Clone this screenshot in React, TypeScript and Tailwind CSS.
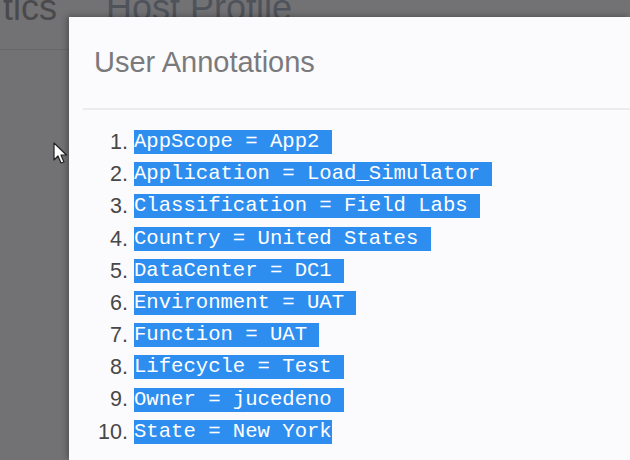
import React from "react";

const annotations = [
  "AppScope = App2 ",
  "Application = Load_Simulator ",
  "Classification = Field Labs ",
  "Country = United States ",
  "DataCenter = DC1 ",
  "Environment = UAT ",
  "Function = UAT ",
  "Lifecycle = Test ",
  "Owner = jucedeno ",
  "State = New York",
];

const Cursor = () => (
  <svg width="16" height="24" viewBox="0 0 16 24" className="absolute left-[53px] top-[142px]">
    <path d="M1 1 L1 18 L5 14 L8 21 L11 20 L8 13 L13.5 13 Z" fill="#ffffff" stroke="#222" strokeWidth="1.2" strokeLinejoin="round" />
  </svg>
);

const App = () => {
  return (
    <div className="relative w-[630px] h-[460px] overflow-hidden bg-[#727174] font-['Liberation_Sans',sans-serif]">
      {/* page behind the dimmed overlay */}
      <div className="h-[50px] border-b border-[#676668] flex items-start overflow-hidden">
        <span className="text-[36px] leading-[30px] text-[#4a494b] ml-[3px] mt-[-7px]">tics</span>
        <span className="text-[36px] leading-[30px] text-[#4e535b] ml-[49px] mt-[-7px]">Host Profile</span>
      </div>

      <Cursor />

      {/* modal */}
      <div className="absolute left-[69px] top-[17px] right-0 bottom-0 bg-[#fbfafc] shadow-[-2px_-1px_6px_rgba(0,0,0,0.3)]">
        <h2 className="pt-[28px] pl-[25px] text-[29px] leading-[34px] text-[#7a7a7c]">User Annotations</h2>
        <div className="mt-[29px] ml-[14px] h-[2px] bg-[#ececee]" />

        <ol className="mt-[16px]">
          {annotations.map((text, i) => (
            <li key={text} className="flex items-center h-[32.2px]">
              <span className="w-[59px] text-right text-[21.5px] text-[#474747]">{i + 1}.</span>
              <span className="ml-[6px] bg-[#2e8ef0] text-white font-['Liberation_Mono',monospace] text-[20.6px] leading-[24px] whitespace-pre">
                {text}
              </span>
            </li>
          ))}
        </ol>
      </div>
    </div>
  );
};

export default App;
